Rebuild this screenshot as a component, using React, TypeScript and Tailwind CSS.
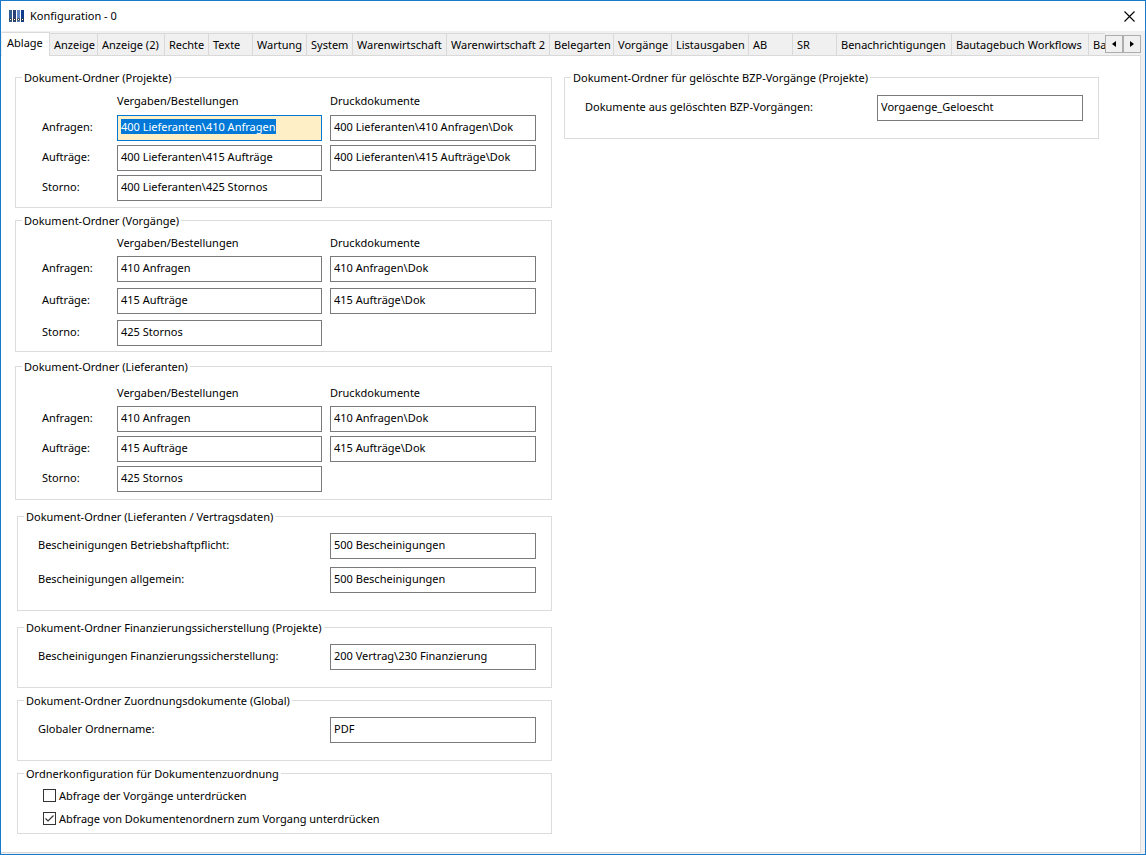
import React, { useEffect, useRef, useState } from 'react';

interface Tab {
  label: string;
  width: string;
}

const TABS: Tab[] = [
  { label: 'Ablage', width: 'w-12' },
  { label: 'Anzeige', width: 'w-12' },
  { label: 'Anzeige (2)', width: 'w-[67px]' },
  { label: 'Rechte', width: 'w-11' },
  { label: 'Texte', width: 'w-11' },
  { label: 'Wartung', width: 'w-[54px]' },
  { label: 'System', width: 'w-[46px]' },
  { label: 'Warenwirtschaft', width: 'w-[94px]' },
  { label: 'Warenwirtschaft 2', width: 'w-[103px]' },
  { label: 'Belegarten', width: 'w-16' },
  { label: 'Vorgänge', width: 'w-[58px]' },
  { label: 'Listausgaben', width: 'w-[77px]' },
  { label: 'AB', width: 'w-11' },
  { label: 'SR', width: 'w-11' },
  { label: 'Benachrichtigungen', width: 'w-[115px]' },
  { label: 'Bautagebuch Workflows', width: 'w-[137px]' },
  { label: 'Ba', width: 'w-11' },
];

const INPUT =
  'h-[26px] w-full min-w-0 border border-[#7a7a7a] bg-white px-[3px] pb-[3px] outline-none selection:bg-[#0078d7] selection:text-white focus:border-[#0078d7] focus:bg-[#ffefc6] focus:caret-[#ff8728]';

interface GroupProps {
  title: string;
  className?: string;
  children: React.ReactNode;
}

const Group: React.FC<GroupProps> = ({ title, className = '', children }) => (
  <fieldset className={`min-w-0 border border-[#dcdcdc] ${className}`}>
    <legend className="ml-1.5 px-0.5 leading-[17px]">{title}</legend>
    {children}
  </fieldset>
);

interface FolderGridProps {
  id: string;
  className: string;
  rowGap: string;
  rows: { label: string; folder: string; print?: string }[];
  firstRef?: React.Ref<HTMLInputElement>;
}

const FolderGrid: React.FC<FolderGridProps> = ({ id, className, rowGap, rows, firstRef }) => (
  <div className={`pr-[15px] pl-[26px] ${className}`}>
    <div className="grid grid-cols-[67px_205fr_206fr] gap-x-2 leading-4">
      <span />
      <span>Vergaben/Bestellungen</span>
      <span>Druckdokumente</span>
    </div>
    <div className={`flex flex-col ${rowGap}`}>
      {rows.map((row, i) => (
        <div key={row.label} className="grid grid-cols-[67px_205fr_206fr] items-center gap-x-2">
          <label htmlFor={`${id}-${i}`} className="pb-[2px]">{row.label}</label>
          <input
            id={`${id}-${i}`}
            ref={i === 0 ? firstRef : undefined}
            type="text"
            defaultValue={row.folder}
            className={INPUT}
          />
          {row.print && (
            <input
              type="text"
              aria-label={`${row.label} Druckdokumente`}
              defaultValue={row.print}
              className={INPUT}
            />
          )}
        </div>
      ))}
    </div>
  </div>
);

interface FieldProps {
  id: string;
  label: string;
  value: string;
}

const Field: React.FC<FieldProps> = ({ id, label, value }) => (
  <div className="flex items-center justify-between pr-[15px] pl-5">
    <label htmlFor={id} className="pb-[2px]">{label}</label>
    <div className="w-[206px] shrink-0">
      <input id={id} type="text" defaultValue={value} className={INPUT} />
    </div>
  </div>
);

interface CheckProps {
  label: string;
  checked?: boolean;
}

const Check: React.FC<CheckProps> = ({ label, checked }) => (
  <label className="flex h-[23px] items-center gap-[3px] pl-[25px]">
    <span className="grid size-[13px] place-items-center">
      <input
        type="checkbox"
        defaultChecked={checked}
        className="peer col-start-1 row-start-1 size-[13px] appearance-none border border-[#333] bg-white"
      />
      <svg
        viewBox="0 0 13 13"
        className="pointer-events-none invisible col-start-1 row-start-1 size-[13px] peer-checked:visible"
      >
        <path d="M2.5 6.5 5 9l5.5-5.5" fill="none" stroke="#333" strokeWidth="1.2" />
      </svg>
    </span>
    {label}
  </label>
);

const AppIcon = () => (
  <svg viewBox="0 0 15 12" className="h-3 w-[15px]">
    {['#2f5d94', '#2b3f78', '#5f86c4', '#0f3c8c'].map((fill, i) => (
      <g key={fill}>
        <rect x={i * 4} y="0" width="3" height="12" fill={fill} />
        <circle cx={i * 4 + 1.5} cy="9.5" r="1" fill="#fff" stroke="#111" strokeWidth="0.8" />
      </g>
    ))}
  </svg>
);

const App: React.FC = () => {
  const [active, setActive] = useState(0);
  const firstInput = useRef<HTMLInputElement>(null);

  useEffect(() => {
    firstInput.current?.focus();
    firstInput.current?.select();
  }, []);

  return (
    <div className="flex min-h-screen flex-col border border-[#1979ca] bg-[#f0f0f0] font-['Noto_Sans',sans-serif] text-[11px] leading-4 text-black">
      {/* Title bar */}
      <header className="flex h-[30px] items-center justify-between bg-white pr-2.5 pl-2">
        <div className="flex items-center gap-1.5">
          <AppIcon />
          <h1>Konfiguration - 0</h1>
        </div>
        <button type="button" aria-label="Schließen">
          <svg viewBox="0 0 11 11" className="size-[11px]">
            <path d="M.5.5l10 10M10.5.5l-10 10" stroke="#000" strokeWidth="1.1" />
          </svg>
        </button>
      </header>

      {/* Tabs */}
      <div className="mr-1 flex h-[25px] items-end border-b border-[#d9d9d9]">
        <div role="tablist" className="-mb-px flex min-w-0 flex-1 items-end overflow-hidden pl-px">
          {TABS.map((tab, i) => (
            <button
              key={tab.label}
              type="button"
              role="tab"
              aria-selected={i === active}
              onClick={() => setActive(i)}
              className={`shrink-0 overflow-hidden border-r border-[#d9d9d9] text-left whitespace-nowrap ${tab.width} ${
                i === active ? 'h-6 border-t bg-white pb-1 pl-[5px]' : 'h-[23px] border-y pl-1'
              }`}
            >
              {tab.label}
            </button>
          ))}
        </div>
        <div className="mb-[2px] flex">
          <button type="button" aria-label="Zurück" className="grid h-[18px] w-[18px] place-items-center border border-[#adadad]">
            <svg viewBox="0 0 4 6" className="h-1.5 w-1"><path d="M4 0v6L0 3z" /></svg>
          </button>
          <button type="button" aria-label="Weiter" className="grid h-[18px] w-[18px] place-items-center border border-[#adadad]">
            <svg viewBox="0 0 4 6" className="h-1.5 w-1"><path d="M0 0v6l4-3z" /></svg>
          </button>
        </div>
      </div>

      <main className="mr-1 mb-px grid flex-1 grid-cols-[537fr_535fr] items-start gap-x-3 border-r border-b border-[#d9d9d9] bg-white pt-[13px] pr-[41px] pb-[18px] pl-3.5">
        <div className="flex flex-col">
          <Group title="Dokument-Ordner (Projekte)">
            <FolderGrid
              id="projekte"
              className="flex flex-col gap-1.5 pt-[7px] pb-1.5"
              rowGap="gap-1"
              firstRef={firstInput}
              rows={[
                { label: 'Anfragen:', folder: '400 Lieferanten\\410 Anfragen', print: '400 Lieferanten\\410 Anfragen\\Dok' },
                { label: 'Aufträge:', folder: '400 Lieferanten\\415 Aufträge', print: '400 Lieferanten\\415 Aufträge\\Dok' },
                { label: 'Storno:', folder: '400 Lieferanten\\425 Stornos' },
              ]}
            />
          </Group>
          <Group title="Dokument-Ordner (Vorgänge)" className="mt-1">
            <FolderGrid
              id="vorgaenge"
              className="flex flex-col gap-[5px] pt-1.5 pb-[5px]"
              rowGap="gap-1.5"
              rows={[
                { label: 'Anfragen:', folder: '410 Anfragen', print: '410 Anfragen\\Dok' },
                { label: 'Aufträge:', folder: '415 Aufträge', print: '415 Aufträge\\Dok' },
                { label: 'Storno:', folder: '425 Stornos' },
              ]}
            />
          </Group>
          <Group title="Dokument-Ordner (Lieferanten)" className="mt-1.5">
            <FolderGrid
              id="lieferanten"
              className="flex flex-col gap-[5px] pt-2.5 pb-[7px]"
              rowGap="gap-1"
              rows={[
                { label: 'Anfragen:', folder: '410 Anfragen', print: '410 Anfragen\\Dok' },
                { label: 'Aufträge:', folder: '415 Aufträge', print: '415 Aufträge\\Dok' },
                { label: 'Storno:', folder: '425 Stornos' },
              ]}
            />
          </Group>
          <Group title="Dokument-Ordner (Lieferanten / Vertragsdaten)" className="mt-2 ml-0.5">
            <div className="flex flex-col gap-2 pt-2 pb-[17px]">
              <Field id="betriebshaftpflicht" label="Bescheinigungen Betriebshaftpflicht:" value="500 Bescheinigungen" />
              <Field id="allgemein" label="Bescheinigungen allgemein:" value="500 Bescheinigungen" />
            </div>
          </Group>
          <Group title="Dokument-Ordner Finanzierungssicherstellung (Projekte)" className="mt-2 ml-0.5">
            <div className="pt-2 pb-[17px]">
              <Field id="finanzierung" label="Bescheinigungen Finanzierungssicherstellung:" value="200 Vertrag\230 Finanzierung" />
            </div>
          </Group>
          <Group title="Dokument-Ordner Zuordnungsdokumente (Global)" className="mt-1 ml-0.5">
            <div className="pt-2 pb-[17px]">
              <Field id="global" label="Globaler Ordnername:" value="PDF" />
            </div>
          </Group>
          <Group title="Ordnerkonfiguration für Dokumentenzuordnung" className="mt-1 ml-0.5">
            <div className="pt-[2px] pb-[3px]">
              <Check label="Abfrage der Vorgänge unterdrücken" />
              <Check label="Abfrage von Dokumentenordnern zum Vorgang unterdrücken" checked />
            </div>
          </Group>
        </div>

        <Group title="Dokument-Ordner für gelöschte BZP-Vorgänge (Projekte)">
          <div className="pt-[9px] pb-[17px]">
            <Field id="geloescht" label="Dokumente aus gelöschten BZP-Vorgängen:" value="Vorgaenge_Geloescht" />
          </div>
        </Group>
      </main>
    </div>
  );
};

export default App;
